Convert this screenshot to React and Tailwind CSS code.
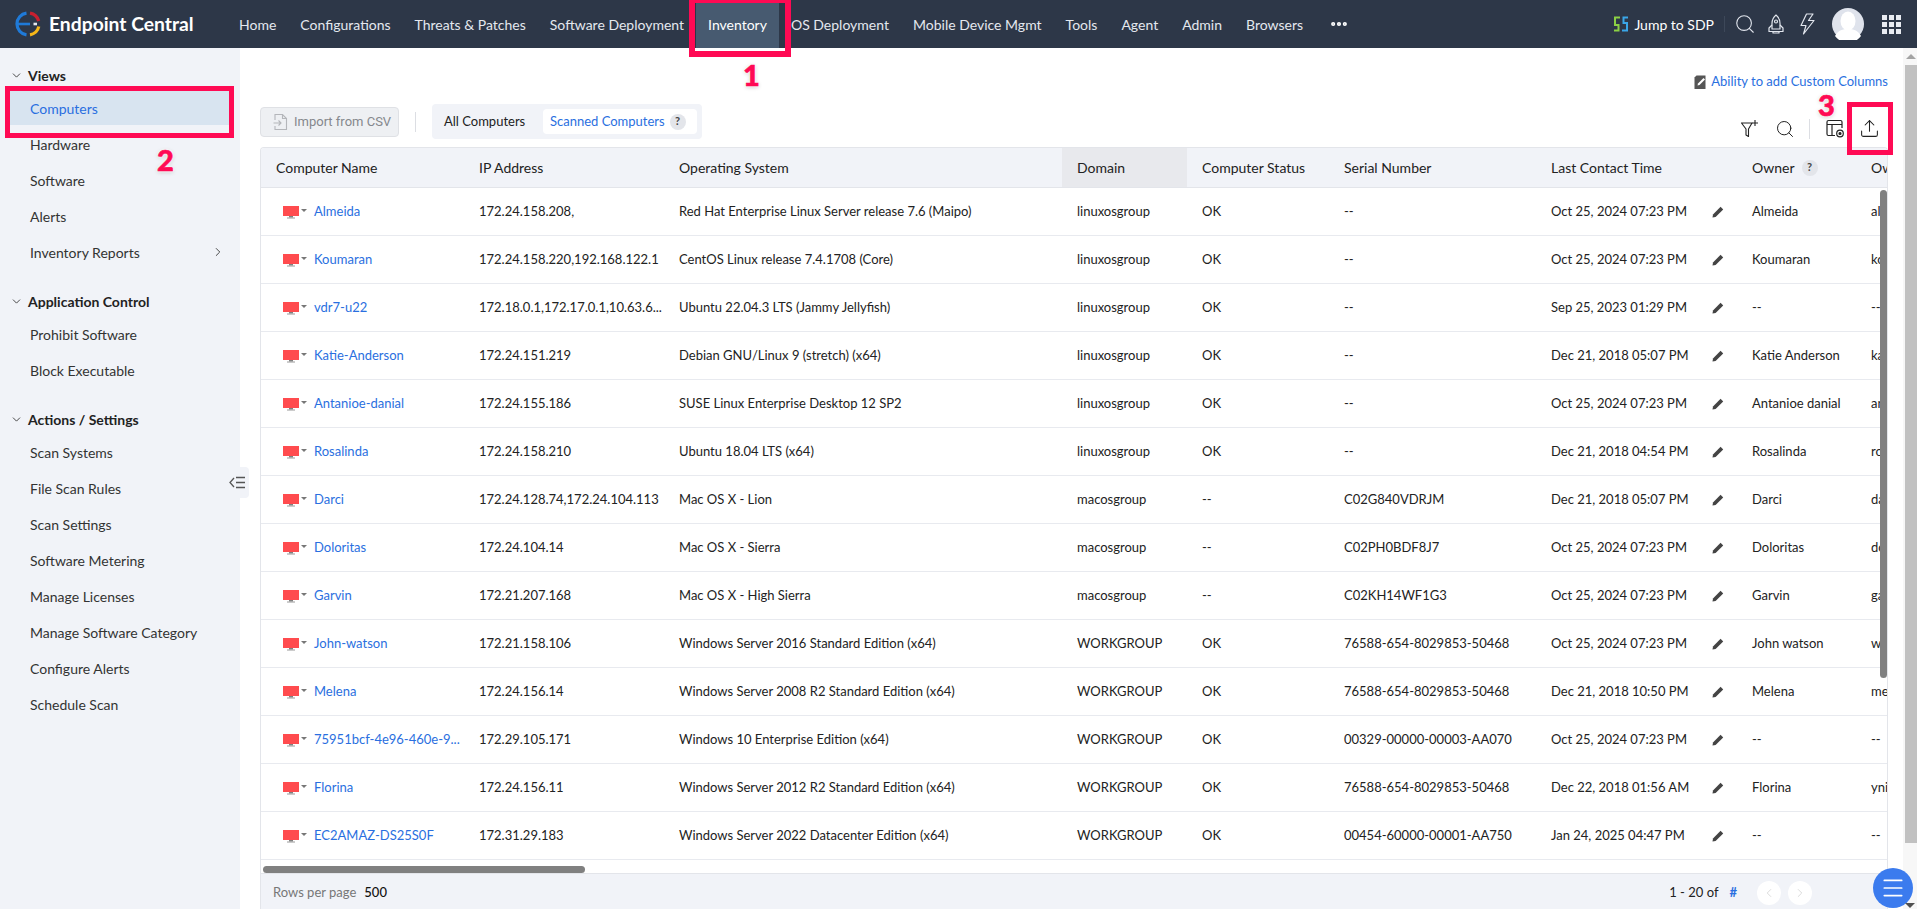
import React from "react";
import { ChevronDown, ChevronRight, ChevronLeft, Search, MoreHorizontal, Menu, Upload } from "lucide-react";

const navItems = ["Home", "Configurations", "Threats & Patches", "Software Deployment", "Inventory", "OS Deployment", "Mobile Device Mgmt", "Tools", "Agent", "Admin", "Browsers"];

const sideGroups = [
    { title: "Views", items: ["Computers", "Hardware", "Software", "Alerts", "Inventory Reports"] },
    { title: "Application Control", items: ["Prohibit Software", "Block Executable"] },
    { title: "Actions / Settings", items: ["Scan Systems", "File Scan Rules", "Scan Settings", "Software Metering", "Manage Licenses", "Manage Software Category", "Configure Alerts", "Schedule Scan"] },
];

const rows = [
    ["Almeida", "172.24.158.208,", "Red Hat Enterprise Linux Server release 7.6 (Maipo)", "linuxosgroup", "OK", "--", "Oct 25, 2024 07:23 PM", "Almeida", "almeida"],
    ["Koumaran", "172.24.158.220,192.168.122.1", "CentOS Linux release 7.4.1708 (Core)", "linuxosgroup", "OK", "--", "Oct 25, 2024 07:23 PM", "Koumaran", "koumaran"],
    ["vdr7-u22", "172.18.0.1,172.17.0.1,10.63.6...", "Ubuntu 22.04.3 LTS (Jammy Jellyfish)", "linuxosgroup", "OK", "--", "Sep 25, 2023 01:29 PM", "--", "--"],
    ["Katie-Anderson", "172.24.151.219", "Debian GNU/Linux 9 (stretch) (x64)", "linuxosgroup", "OK", "--", "Dec 21, 2018 05:07 PM", "Katie Anderson", "katie"],
    ["Antanioe-danial", "172.24.155.186", "SUSE Linux Enterprise Desktop 12 SP2", "linuxosgroup", "OK", "--", "Oct 25, 2024 07:23 PM", "Antanioe danial", "antanioe"],
    ["Rosalinda", "172.24.158.210", "Ubuntu 18.04 LTS (x64)", "linuxosgroup", "OK", "--", "Dec 21, 2018 04:54 PM", "Rosalinda", "rosalinda"],
    ["Darci", "172.24.128.74,172.24.104.113", "Mac OS X - Lion", "macosgroup", "--", "C02G840VDRJM", "Dec 21, 2018 05:07 PM", "Darci", "darci"],
    ["Doloritas", "172.24.104.14", "Mac OS X - Sierra", "macosgroup", "--", "C02PH0BDF8J7", "Oct 25, 2024 07:23 PM", "Doloritas", "doloritas"],
    ["Garvin", "172.21.207.168", "Mac OS X - High Sierra", "macosgroup", "--", "C02KH14WF1G3", "Oct 25, 2024 07:23 PM", "Garvin", "garvin"],
    ["John-watson", "172.21.158.106", "Windows Server 2016 Standard Edition (x64)", "WORKGROUP", "OK", "76588-654-8029853-50468", "Oct 25, 2024 07:23 PM", "John watson", "watson"],
    ["Melena", "172.24.156.14", "Windows Server 2008 R2 Standard Edition (x64)", "WORKGROUP", "OK", "76588-654-8029853-50468", "Dec 21, 2018 10:50 PM", "Melena", "melena"],
    ["75951bcf-4e96-460e-9...", "172.29.105.171", "Windows 10 Enterprise Edition (x64)", "WORKGROUP", "OK", "00329-00000-00003-AA070", "Oct 25, 2024 07:23 PM", "--", "--"],
    ["Florina", "172.24.156.11", "Windows Server 2012 R2 Standard Edition (x64)", "WORKGROUP", "OK", "76588-654-8029853-50468", "Dec 22, 2018 01:56 AM", "Florina", "ynina"],
    ["EC2AMAZ-DS25S0F", "172.31.29.183", "Windows Server 2022 Datacenter Edition (x64)", "WORKGROUP", "OK", "00454-60000-00001-AA750", "Jan 24, 2025 04:47 PM", "--", "--"],
];

const gridCols = "grid grid-cols-[203px_200px_398px_125px_142px_207px_201px_119px_100px]";

const Logo = () => (
    <svg width="26" height="26" viewBox="0 0 26 26" fill="none" strokeWidth="3.2">
        <path d="M11.5 2.1A11 11 0 0 0 11.5 23.9" stroke="#1f7ad8" />
        <path d="M15 2.2A11 11 0 0 1 23.7 10" stroke="#c8202f" />
        <path d="M23.8 15.5A11 11 0 0 1 15 23.8" stroke="#f5b618" />
        <path d="M3 13H15" stroke="#1f7ad8" strokeWidth="2.6" />
        <path d="M18.5 13H22" stroke="#e7eaf0" strokeWidth="2.6" />
    </svg>
);

const SdpIcon = () => (
    <svg width="16" height="16" viewBox="0 0 16 16" fill="none" strokeWidth="2">
        <path d="M7 1.5H2V9H5.5V14.5H1" stroke="#8bd044" />
        <path d="M9 14.5H14V7H10.5V1.5H15" stroke="#3aa6e8" />
    </svg>
);

const RocketIcon = () => (
    <svg width="18" height="20" viewBox="0 0 18 20" fill="none" stroke="#e2e6ee" strokeWidth="1.2" strokeLinejoin="round">
        <path d="M9 1C6 3.5 5 6.5 5 9.5V15H13V9.5C13 6.5 12 3.5 9 1Z" />
        <circle cx="9" cy="7.5" r="1.5" />
        <path d="M5 11L2 14V17.5H16V14L13 11" />
        <path d="M6 17.5V19H12V17.5" />
    </svg>
);

const BoltIcon = () => (
    <svg width="15" height="22" viewBox="0 0 15 22" fill="none" stroke="#e2e6ee" strokeWidth="1.2" strokeLinejoin="round">
        <path d="M6.5 1L1 12.5H6L3.5 21L14 7.5H8.5L13 1Z" />
    </svg>
);

const Avatar = () => (
    <svg width="32" height="32" viewBox="0 0 32 32">
        <circle cx="16" cy="16" r="16" fill="#dfe3ec" />
        <ellipse cx="16" cy="13" rx="7.5" ry="9.5" fill="#fff" />
        <path d="M3 28C6 22 11 21 16 21S26 22 29 28A16 16 0 0 1 3 28Z" fill="#fff" />
    </svg>
);

const GridDots = () => (
    <div className="grid grid-cols-3 gap-[2px]">
        {Array.from({ length: 9 }).map((_, i) => (
            <div key={i} className="w-[5px] h-[5px] bg-[#e8ebf1]" />
        ))}
    </div>
);

const MonitorIcon = () => (
    <svg width="16" height="13" viewBox="0 0 16 13" className="shrink-0 mt-[2px]">
        <rect x="0" y="0" width="16" height="10" fill="#ff4b4e" />
        <rect x="6" y="10" width="4" height="1.5" fill="#7f7f7f" />
        <rect x="4" y="11.5" width="8" height="1" fill="#9a9a9a" />
    </svg>
);

const PencilIcon = () => (
    <svg width="12" height="12" viewBox="0 0 12 12" fill="#444">
        <path d="M8.6 0.8L11.2 3.4L3.6 11L0.5 11.6L1 8.4Z" />
    </svg>
);

const ImportIcon = () => (
    <svg width="15" height="18" viewBox="0 0 15 18" fill="none" stroke="#b4b6ba" strokeWidth="1.1">
        <path d="M2 7V1.5H9.5L13.5 5.5V16.5H2V13" />
        <path d="M9.5 1.5V5.5H13.5" />
        <path d="M0.5 10H8M5.5 7.5L8 10L5.5 12.5" />
    </svg>
);

const FilterPlusIcon = () => (
    <svg width="20" height="20" viewBox="0 0 20 20" fill="none" stroke="#222" strokeWidth="1.1" strokeLinejoin="round">
        <path d="M1.5 4H12L8.5 10V17.5L6 16V10Z" />
        <path d="M15 1V7M12 4H18" />
    </svg>
);

const ColumnsIcon = () => (
    <svg width="19" height="19" viewBox="0 0 19 19" fill="none" stroke="#222" strokeWidth="1.2">
        <path d="M9 16.5H2.5A1.5 1.5 0 0 1 1 15V3A1.5 1.5 0 0 1 2.5 1.5H14.5A1.5 1.5 0 0 1 16 3V9" />
        <path d="M1 5.5H16M6 5.5V16.5" />
        <circle cx="14" cy="14.5" r="3.3" />
        <circle cx="14" cy="14.5" r="1" fill="#222" />
    </svg>
);

const NoteIcon = () => (
    <svg width="13" height="15" viewBox="0 0 13 15">
        <path d="M0.5 2.5L2.5 0.5H11.5V14H0.5Z" fill="#555" />
        <path d="M9.5 3L11 4.5L5.5 10L3.5 10.5L4 8.5Z" fill="#fff" />
    </svg>
);

const CollapseIcon = () => (
    <svg width="17" height="13" viewBox="0 0 17 13" fill="none" stroke="#555" strokeWidth="1.3">
        <path d="M5 2L1 6.5L5 11" />
        <path d="M7 1.5H16M7 6.5H16M7 11.5H16" />
    </svg>
);

const Help = () => (
    <span className="flex items-center justify-center w-4 h-4 rounded-full bg-[#e3e5ea] text-[11px] font-bold text-[#444]">?</span>
);

const Marker = ({ className, children }) => (
    <span className={`absolute z-30 text-[29px] leading-none font-black text-[#ff0a54] [-webkit-text-stroke:0.6px_#ff0a54] [text-shadow:0_0_3px_#fff,0_0_3px_#fff,0_1px_4px_#bbb] ${className}`}>{children}</span>
);

const App = () => {
    return (
        <div className="relative w-screen h-screen overflow-hidden flex flex-col bg-white font-[Lato,sans-serif] text-[14px] text-[#222]">
            {/* Top bar */}
            <header className="h-12 shrink-0 flex items-center bg-[#2d3748] text-[#e4e8ef]">
                <div className="w-[227px] shrink-0 flex items-center pl-[15px] gap-[8px]">
                    <Logo />
                    <span className="text-[19.3px] font-bold text-white whitespace-nowrap">Endpoint Central</span>
                </div>
                <nav className="flex items-stretch h-full">
                    {navItems.map((item) => (
                        <a key={item} className={`flex items-center px-3 whitespace-nowrap ${item === "Inventory" ? "bg-[#475a70] text-white" : ""}`}>
                            {item}
                        </a>
                    ))}
                    <div className="flex items-center pl-[14px]">
                        <MoreHorizontal size={20} className="text-white" strokeWidth={3} />
                    </div>
                </nav>
                <div className="ml-auto flex items-center pr-4">
                    <SdpIcon />
                    <span className="ml-[5px] text-white whitespace-nowrap">Jump to SDP</span>
                    <div className="w-px h-[16px] bg-[#3d4859] ml-[10px] mr-[9px]" />
                    <Search size={22} strokeWidth={1.2} className="text-[#e2e6ee]" />
                    <div className="w-[11px]" />
                    <RocketIcon />
                    <div className="w-[15px]" />
                    <BoltIcon />
                    <div className="w-[17px]" />
                    <Avatar />
                    <div className="w-[18px]" />
                    <GridDots />
                </div>
            </header>

            <div className="flex flex-1 min-h-0">
                {/* Sidebar */}
                <aside className="w-[240px] shrink-0 bg-[#f1f3f8] pt-3">
                    {sideGroups.map((group, g) => (
                        <div key={group.title} className={g > 0 ? "mt-[17px]" : ""}>
                            <div className="h-[31px] flex items-center pl-[10px] gap-[5px] font-bold text-[#222]">
                                <ChevronDown size={13} strokeWidth={1.5} />
                                <span>{group.title}</span>
                            </div>
                            {group.items.map((item) => (
                                <div
                                    key={item}
                                    className={`h-[34px] mb-[2px] mx-[10px] flex items-center justify-between pl-[20px] pr-[5px] ${item === "Computers" ? "bg-[#d8e4f0] text-[#2a6fe0]" : "text-[#333]"}`}
                                >
                                    <span>{item}</span>
                                    {item === "Inventory Reports" && <ChevronRight size={14} strokeWidth={1.5} />}
                                </div>
                            ))}
                        </div>
                    ))}
                </aside>

                {/* Main */}
                <main className="relative flex-1 min-w-0 flex flex-col pl-5 pr-[15px]">
                    <div className="h-[24px] mt-[22px] flex items-center justify-end gap-[4px] text-[13px] text-[#2a6fe0]">
                        <NoteIcon />
                        <span>Ability to add Custom Columns</span>
                    </div>

                    <div className="h-[35px] mt-[10px] flex items-center">
                        <button className="h-[30px] w-[139px] flex items-center pl-[12px] gap-[6px] bg-[#eef0f3] border border-[#dfe1e5] rounded font-[Roboto,sans-serif] text-[13px] text-[#85888d]">
                            <ImportIcon />
                            <span>Import from CSV</span>
                        </button>
                        <div className="w-px h-5 bg-[#dcdee3] ml-4 mr-4" />
                        <div className="h-[35px] w-[270px] flex items-center bg-[#f1f3f8] rounded px-[5px] text-[13px]">
                            <span className="pl-[7px] w-[106px]">All Computers</span>
                            <div className="h-[25px] w-[154px] pl-[7px] flex items-center gap-[5px] bg-white rounded text-[#2a6fe0]">
                                <span>Scanned Computers</span>
                                <Help />
                            </div>
                        </div>
                        <div className="ml-auto mt-[14px] flex items-center pr-[8px]">
                            <FilterPlusIcon />
                            <Search size={20} strokeWidth={1.2} className="ml-[15px]" />
                            <div className="w-px h-5 bg-[#dcdee3] ml-[14px] mr-[16px]" />
                            <ColumnsIcon />
                            <Upload size={21} strokeWidth={1.2} className="ml-[14px]" />
                        </div>
                    </div>

                    {/* Table */}
                    <div className="relative mt-[8px] flex-1 min-h-0 flex flex-col overflow-hidden border-x border-t border-[#e3e5ea] rounded-t">
                        <div className={`${gridCols} h-10 shrink-0 bg-[#f1f3f8] border-b border-[#e3e5ea]`}>
                            {["Computer Name", "IP Address", "Operating System", "Domain", "Computer Status", "Serial Number", "Last Contact Time", "Owner", "Owner Email"].map((h) => (
                                <div key={h} className={`flex items-center pl-[15px] gap-[7px] whitespace-nowrap ${h === "Domain" ? "bg-[#e8e9ed]" : ""}`}>
                                    <span>{h}</span>
                                    {h === "Owner" && <Help />}
                                </div>
                            ))}
                        </div>
                        <div className="flex-1 min-h-0 overflow-hidden text-[13px]">
                            {rows.map((r) => (
                                <div key={r[0]} className={`${gridCols} h-12 border-b border-[#e8eaef] whitespace-nowrap`}>
                                    <div className="flex items-center pl-[22px]">
                                        <MonitorIcon />
                                        <span className="ml-[2px] mb-[2px] w-0 h-0 border-x-[3px] border-x-transparent border-t-[3px] border-t-[#777]" />
                                        <span className="ml-[7px] text-[#2a6fe0]">{r[0]}</span>
                                    </div>
                                    <div className="flex items-center pl-[15px]">{r[1]}</div>
                                    <div className="flex items-center pl-[15px]">{r[2]}</div>
                                    <div className="flex items-center pl-[15px]">{r[3]}</div>
                                    <div className="flex items-center pl-[15px]">{r[4]}</div>
                                    <div className="flex items-center pl-[15px]">{r[5]}</div>
                                    <div className="flex items-center justify-between pl-[15px] pr-[13px]">
                                        <span>{r[6]}</span>
                                        <PencilIcon />
                                    </div>
                                    <div className="flex items-center pl-[15px]">{r[7]}</div>
                                    <div className="flex items-center pl-[15px]">{r[8]}</div>
                                </div>
                            ))}
                        </div>
                        {/* scroll thumbs sit over the rows */}
                        <div className="absolute right-0 top-[42px] w-[7px] h-[488px] rounded-full bg-[#808080]" />
                        <div className="absolute left-[2px] bottom-[36px] w-[322px] h-[7px] rounded-full bg-[#808080]" />
                        <div className="h-9 shrink-0 flex items-center bg-[#f1f3f8] border-t border-[#e3e5ea] pl-[12px] pt-[3px] text-[13px]">
                            <span className="text-[#777]">Rows per page</span>
                            <span className="ml-[8px] font-medium text-[#111]">500</span>
                            <div className="ml-auto flex items-center pr-[75px]">
                                <span>1 - 20 of</span>
                                <span className="ml-[11px] font-bold text-[#2a6fe0]">#</span>
                                <span className="ml-[20px] w-6 h-6 rounded-full bg-white flex items-center justify-center text-[#ccc]">
                                    <ChevronLeft size={14} strokeWidth={1.2} />
                                </span>
                                <span className="ml-[7px] w-6 h-6 rounded-full bg-white flex items-center justify-center text-[#ccc]">
                                    <ChevronRight size={14} strokeWidth={1.2} />
                                </span>
                            </div>
                        </div>
                    </div>

                    <div className="absolute left-[-15px] top-[419px] w-[24px] h-[31px] flex items-center justify-center bg-[#f1f3f8] rounded-r">
                        <CollapseIcon />
                    </div>
                </main>

                {/* Page scrollbar */}
                <div className="w-[14px] shrink-0 flex flex-col items-end bg-[#f7f7f7] pl-[2px]">
                    <div className="h-[17px] w-full flex items-center justify-center">
                        <span className="w-0 h-0 border-x-[5px] border-x-transparent border-b-[5px] border-b-[#a3a3a3]" />
                    </div>
                    <div className="w-full h-[778px] bg-[#c1c1c1]" />
                </div>
            </div>

            {/* Floating menu button */}
            <div className="absolute z-20 right-[4px] bottom-[1px] w-10 h-10 rounded-full bg-[#3b7bee] flex items-center justify-center text-white">
                <Menu size={26} strokeWidth={1.6} />
            </div>
            <span className="absolute z-30 right-[2px] bottom-[1px] w-0 h-0 border-x-[5px] border-x-transparent border-t-[5px] border-t-[#505050]" />

            {/* Callouts from the original how-to */}
            <div className="absolute z-30 left-[689px] top-[-3px] w-[102px] h-[60px] border-[6px] border-[#ff0a54]" />
            <div className="absolute z-30 left-[5px] top-[86px] w-[229px] h-[52px] border-[5px] border-[#ff0a54]" />
            <div className="absolute z-30 left-[1847px] top-[102px] w-[46px] h-[53px] border-[5px] border-[#ff0a54]" />
            <Marker className="left-[743px] top-[60px]">1</Marker>
            <Marker className="left-[157px] top-[145px]">2</Marker>
            <Marker className="left-[1818px] top-[90px]">3</Marker>
        </div>
    );
};

export default App;
